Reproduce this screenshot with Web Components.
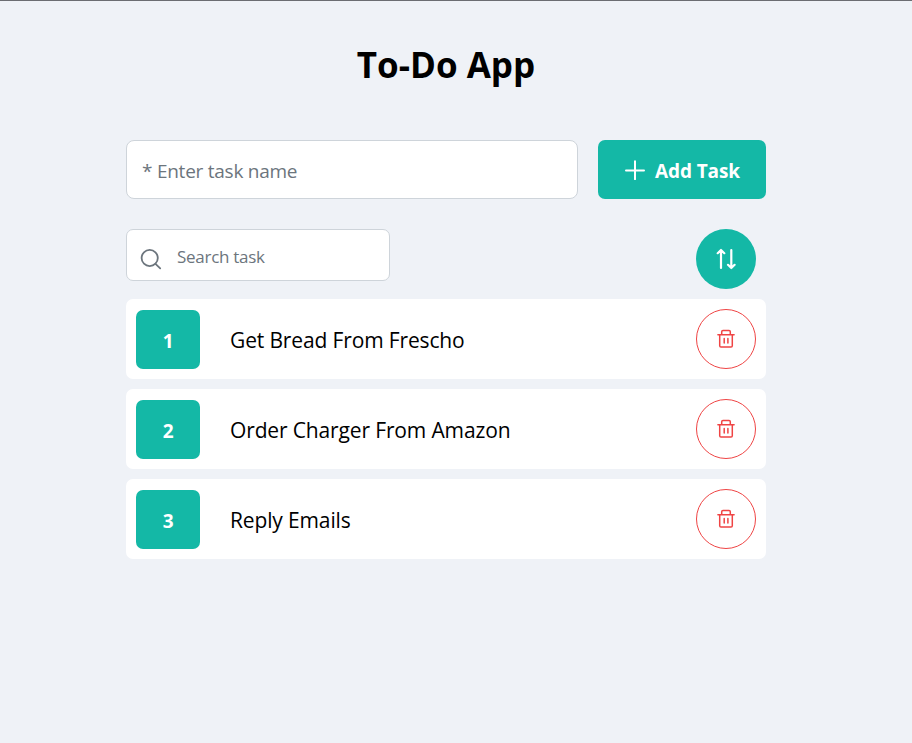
<!DOCTYPE html>
<html lang="en">
<head>
<meta charset="utf-8">
<title>To-Do App</title>
<style>
  body { margin: 0; background: #eff2f7; font-family: "Open Sans", "Noto Sans", sans-serif; }
</style>
</head>
<body>
<todo-app></todo-app>
<script>
const define = (name, html) => customElements.define(name, class extends HTMLElement {
  constructor() {
    super();
    this.attachShadow({ mode: "open" }).innerHTML = html;
  }
});

define("add-icon", `<style>:host{display:block;width:20px;height:20px}svg{display:block}</style>
<svg width="20" height="20" viewBox="0 0 20 20" fill="none" stroke="currentColor" stroke-width="2" stroke-linecap="round"><path d="M10 1.200v18M1 10.500h18"/></svg>`);

define("search-icon", `<style>:host{display:block;width:22px;height:22px}svg{display:block}</style>
<svg width="22" height="22" viewBox="0 0 22 22" fill="none" stroke="currentColor" stroke-width="1.800" stroke-linecap="round"><circle cx="9.700" cy="10" r="8.100"/><path d="M15.500 15.800l4.700 4.600"/></svg>`);

define("sort-icon", `<style>:host{display:block;width:20px;height:22px}svg{display:block}</style>
<svg width="20" height="22" viewBox="0 0 20 22" fill="none" stroke="currentColor" stroke-width="2.200" stroke-linecap="round" stroke-linejoin="round"><path d="M5 20V2M1.700 5.200L5 2l3.300 3.200M15.300 2v18M12 16.800l3.300 3.200 3.300-3.200"/></svg>`);

define("trash-icon", `<style>:host{display:block;width:18px;height:19px}svg{display:block}</style>
<svg width="18" height="19" viewBox="0 0 18 19" fill="none" stroke="currentColor" stroke-width="1.500" stroke-linecap="round" stroke-linejoin="round"><path d="M.9 5.700h16.200M2.700 5.700v11a1.300 1.300 0 0 0 1.300 1.300h10a1.300 1.300 0 0 0 1.300-1.300v-11M4.700 5.500V2.700A1.300 1.300 0 0 1 6 1.400h6a1.300 1.300 0 0 1 1.300 1.300v3M7.200 9.500v4.500M10.900 9.500v4.500"/></svg>`);

define("todo-title", `<style>
:host{display:block;text-align:center;font-size:35px;font-weight:700;line-height:48px;color:#000}
h1{margin:0;font:inherit}</style><h1><slot></slot></h1>`);

define("task-field", `<style>
:host{display:flex;align-items:center;box-sizing:border-box;width:452px;height:59px;padding:3px 15px 0;background:#fff;border:1px solid #ced4da;border-radius:8px;color:#6c757d;font-size:19px;letter-spacing:-.25px}
</style><span><slot></slot></span>`);

define("add-button", `<style>
:host{display:flex;align-items:center;box-sizing:border-box;width:168px;height:59px;padding-left:27px;gap:10px;background:#14b8a6;border-radius:7px;color:#fff;font-size:19px;font-weight:700;letter-spacing:-.1px;white-space:nowrap}
span{padding-top:3px}
</style><add-icon></add-icon><span><slot></slot></span>`);

define("search-field", `<style>
:host{display:flex;align-items:center;box-sizing:border-box;width:264px;height:52px;padding-left:13px;gap:15px;background:#fff;border:1px solid #ced4da;border-radius:7px;color:#6c757d;font-size:17px;letter-spacing:-.28px}
search-icon{margin-top:8px}span{padding-top:3px}
</style><search-icon></search-icon><span><slot></slot></span>`);

define("sort-button", `<style>
:host{display:grid;place-items:center;width:60px;height:60px;border-radius:50%;background:#14b8a6;color:#fff}
</style><sort-icon></sort-icon>`);

define("delete-button", `<style>
:host{display:grid;place-items:center;box-sizing:border-box;width:60px;height:60px;border-radius:50%;border:1px solid #ef4444;color:#ef4444}
trash-icon{margin-bottom:1px}
</style><trash-icon></trash-icon>`);

define("todo-item", `<style>
:host{display:flex;align-items:center;box-sizing:border-box;height:80px;padding:0 10px;background:#fff;border-radius:7px;color:#000;font-size:21px;letter-spacing:-.14px}
.num{display:grid;place-items:center;box-sizing:border-box;width:64px;height:59px;margin-top:1px;padding-top:3px;background:#14b8a6;border-radius:7px;color:#fff;font-size:19px;font-weight:700}
.name{flex:1;padding:2px 0 0 30px;white-space:nowrap}
</style><div class="num"><slot name="num"></slot></div><div class="name"><slot></slot></div><delete-button></delete-button>`);

define("todo-app", `<style>
:host{display:block;box-sizing:border-box;height:743px;border-top:1px solid #6b6d72;padding:40px 146px 0 126px}
.row{display:flex;justify-content:space-between}
.entry{margin-top:51px}
.tools{margin-top:30px;padding-right:10px}
.list{display:flex;flex-direction:column;gap:10px;margin-top:10px}
</style>
<todo-title>To-Do App</todo-title>
<div class="row entry"><task-field>* Enter task name</task-field><add-button>Add Task</add-button></div>
<div class="row tools"><search-field>Search task</search-field><sort-button></sort-button></div>
<div class="list">
<todo-item><span slot="num">1</span>Get Bread From Frescho</todo-item>
<todo-item><span slot="num">2</span>Order Charger From Amazon</todo-item>
<todo-item><span slot="num">3</span>Reply Emails</todo-item>
</div>`);
</script>
</body>
</html>
